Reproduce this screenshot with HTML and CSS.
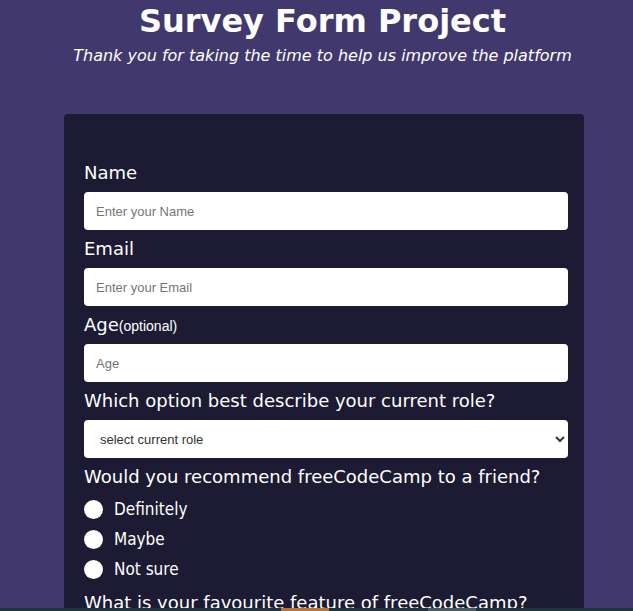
FILE: index.html
```html
<!DOCTYPE html>
<html lang="en">
<head>
<meta charset="utf-8">
<title>Survey Form Project</title>
<link rel="stylesheet" href="styles.css">
</head>
<body>
  <header class="header">
    <h1 class="title">Survey Form Project</h1>
    <p class="subtitle">Thank you for taking the time to help us improve the platform</p>
  </header>
  <form class="card">
    <div class="field">
      <label class="label" for="name">Name</label>
      <input class="input" id="name" type="text" placeholder="Enter your Name">
    </div>
    <div class="field">
      <label class="label" for="email">Email</label>
      <input class="input" id="email" type="email" placeholder="Enter your Email">
    </div>
    <div class="field">
      <label class="label" for="age">Age<span class="optional">(optional)</span></label>
      <input class="input" id="age" type="number" placeholder="Age">
    </div>
    <div class="field">
      <label class="label" for="role">Which option best describe your current role?</label>
      <select class="input select" id="role">
        <option>select current role</option>
        <option>Student</option>
        <option>Full Time Job</option>
      </select>
    </div>
    <div class="field">
      <p class="label">Would you recommend freeCodeCamp to a friend?</p>
      <div class="radios">
        <label class="radio-row"><input class="radio" type="radio" name="rec">Definitely</label>
        <label class="radio-row"><input class="radio" type="radio" name="rec">Maybe</label>
        <label class="radio-row"><input class="radio" type="radio" name="rec">Not sure</label>
      </div>
    </div>
    <div class="field">
      <label class="label" for="feature">What is your favourite feature of freeCodeCamp?</label>
      <select class="input select" id="feature">
        <option>Select an option</option>
      </select>
    </div>
  </form>
  <div class="testbar">
    <span class="seg seg-orange"></span>
    <span class="seg seg-grey"></span>
  </div>
</body>
</html>
```
FILE: styles.css
```css
html, body {
  margin: 0;
  padding: 0;
}
body {
  background: #41396d;
  color: #fff;
  font-family: "DejaVu Sans", Verdana, sans-serif;
  min-height: 700px;
}
.header {
  text-align: center;
  padding: 3px 0 0 12px;
}
.title {
  margin: 0;
  font-size: 32px;
  font-weight: bold;
  line-height: 37px;
}
.subtitle {
  margin: 6px 0 0;
  font-size: 16px;
  font-style: italic;
  line-height: 20px;
}
.card {
  margin: 48px 49px 0 64px;
  background: #1c1b33;
  border-radius: 4px;
  padding: 48px 16px 60px 20px;
}
.field {
  margin-bottom: 8px;
}
.label {
  display: block;
  margin: 0 0 9px;
  font-size: 18px;
  line-height: 21px;
}
.optional {
  font-family: "Liberation Sans", Arial, sans-serif;
  font-size: 14px;
  line-height: 1;
}
.input {
  display: block;
  box-sizing: border-box;
  width: 100%;
  height: 38px;
  margin: 0;
  padding: 0 12px;
  border: none;
  border-radius: 4px;
  background: #fff;
  font-family: "Liberation Sans", Arial, sans-serif;
  font-size: 13px;
  color: #333;
}
.input::placeholder {
  color: #757575;
}
.select {
  padding-left: 12px;
  color: #333;
}
.radios {
  margin-top: -2px;
}
.radio-row {
  display: flex;
  align-items: center;
  gap: 11px;
  height: 30px;
  font-family: "DejaVu Sans Condensed", "DejaVu Sans", sans-serif;
  font-size: 17px;
}
.radio {
  appearance: none;
  -webkit-appearance: none;
  margin: 0;
  width: 19px;
  height: 19px;
  border-radius: 50%;
  background: #fff;
  box-shadow: 0 0 1px rgba(0, 0, 0, 0.6);
  flex: none;
}
.testbar {
  position: fixed;
  left: 0;
  right: 0;
  bottom: 0;
  height: 3px;
  background: #1f323d;
}
.seg {
  position: absolute;
  top: 0;
  height: 3px;
  width: 48px;
}
.seg-orange {
  left: 281px;
  background: #b5743a;
}
.seg-grey {
  left: 428px;
  background: #4a5862;
}
```
